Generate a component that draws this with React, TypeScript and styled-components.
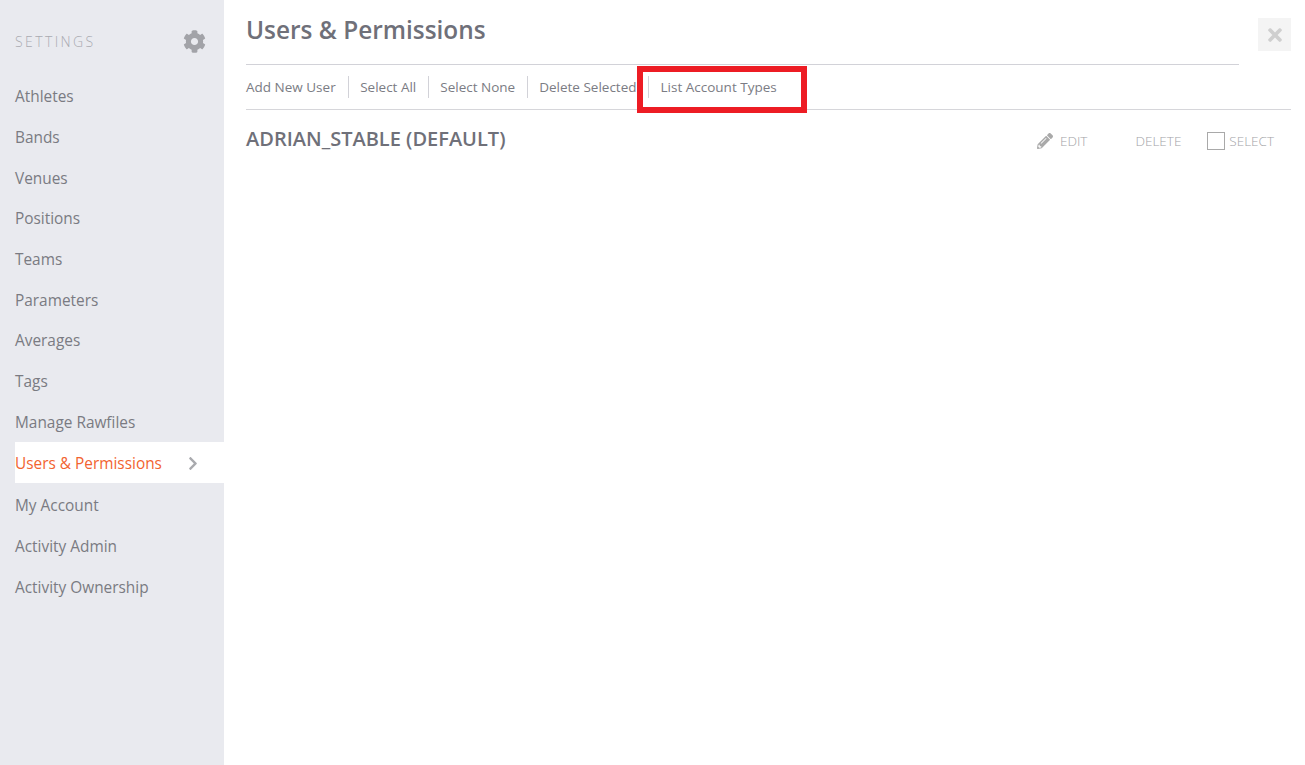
import React from 'react';
import styled, { createGlobalStyle } from 'styled-components';
import { FaCog, FaPencilAlt, FaChevronRight, FaTimes } from 'react-icons/fa';

const GlobalStyle = createGlobalStyle`
    html, body {
        margin: 0;
        padding: 0;
        height: 100%;
        background: #fff;
        font-family: "Open Sans", "Liberation Sans", sans-serif;
        overflow: hidden;
    }
`

const Page = styled.div`
    display: flex;
    width: 1305px;
    height: 765px;
    position: relative;
`

const Sidebar = styled.aside`
    width: 224px;
    flex: none;
    background: #e9eaef;
    padding-left: 15px;
    box-sizing: border-box;
`

const SidebarHead = styled.div`
    display: flex;
    align-items: center;
    justify-content: space-between;
    box-sizing: border-box;
    height: 76.3px;
    padding-top: 6.7px;
    padding-right: 18px;
`

const SidebarTitle = styled.span`
    font-size: 14px;
    font-weight: 300;
    letter-spacing: 2.4px;
    color: #a9abb1;
`

const GearIcon = styled(FaCog)`
    width: 23px;
    height: 23px;
    color: #a2a3a8;
`

const Nav = styled.nav`
    display: flex;
    flex-direction: column;
`

const NavItem = styled.div<{ $active?: boolean }>`
    display: flex;
    align-items: center;
    justify-content: space-between;
    flex: none;
    box-sizing: border-box;
    height: 40.7px;
    margin-top: ${p => (p.$active ? '-0.6px' : '0')};
    margin-bottom: ${p => (p.$active ? '2.8px' : '0')};
    padding-top: ${p => (p.$active ? '1.6px' : '0')};
    padding-right: 24px;
    font-size: 15.4px;
    color: ${p => (p.$active ? '#f26330' : '#7a7b82')};
    background: ${p => (p.$active ? '#fff' : 'transparent')};
`

const ChevronIcon = styled(FaChevronRight)`
    width: 14px;
    height: 15px;
    color: #a9aaae;
`

const Main = styled.main`
    flex: 1;
    padding-left: 22px;
    padding-right: 14px;
    min-width: 0;
`

const Header = styled.header`
    display: flex;
    align-items: flex-start;
    justify-content: space-between;
`

const TitleBar = styled.div`
    width: 993px;
    height: 64px;
    border-bottom: 1px solid #d2d2d8;
`

const Title = styled.h1`
    margin: 0;
    padding-top: 12px;
    font-size: 24.4px;
    line-height: 35px;
    font-weight: 600;
    color: #6f7079;
`

const CloseButton = styled.div`
    width: 33px;
    height: 33px;
    margin-top: 18px;
    display: flex;
    align-items: center;
    justify-content: center;
    background: #f4f4f4;
    color: #cfcfcf;
`

const Toolbar = styled.div`
    display: flex;
    align-items: center;
    height: 44px;
    border-bottom: 1px solid #d6d6da;
`

const ToolLink = styled.span`
    display: flex;
    align-items: center;
    height: 22px;
    padding: 0 11.5px;
    font-size: 13.5px;
    color: #7b7c84;
    border-left: 1px solid #d2d2d8;
    white-space: nowrap;
    &:first-child {
        padding-left: 0;
        padding-right: 12px;
        border-left: 0;
    }
`

const UserRow = styled.div`
    display: flex;
    align-items: center;
    justify-content: space-between;
    height: 60px;
`

const UserName = styled.h2`
    margin: 0;
    font-size: 20px;
    font-weight: 600;
    color: #6f7079;
    position: relative;
    top: -2px;
`

const UserActions = styled.div`
    display: flex;
    align-items: center;
    padding-top: 2px;
    padding-right: 17px;
    font-size: 13.5px;
    font-weight: 300;
    color: #a3a4a8;
`

const Action = styled.span<{ $gap?: number }>`
    display: flex;
    align-items: center;
    margin-left: ${p => p.$gap ?? 0}px;
`

const PencilIcon = styled(FaPencilAlt)`
    width: 16px;
    height: 16px;
    margin-right: 7px;
    color: #a9a9a9;
`

const CheckBox = styled.span`
    width: 16px;
    height: 16px;
    margin-right: 4px;
    border: 1px solid #a9a9a9;
    display: block;
`

// red callout drawn on top of the toolbar
const Callout = styled.div`
    position: absolute;
    left: 637px;
    top: 66px;
    width: 170px;
    height: 47px;
    box-sizing: border-box;
    border: 6px solid #ed1c24;
    pointer-events: none;
`

const navItems = ['Athletes', 'Bands', 'Venues', 'Positions', 'Teams', 'Parameters', 'Averages', 'Tags', 'Manage Rawfiles', 'Users & Permissions', 'My Account', 'Activity Admin', 'Activity Ownership'];
const tools = ['Add New User', 'Select All', 'Select None', 'Delete Selected', 'List Account Types'];

const App = () => {
    return (
        <Page>
            <GlobalStyle />
            <Sidebar>
                <SidebarHead>
                    <SidebarTitle>SETTINGS</SidebarTitle>
                    <GearIcon />
                </SidebarHead>
                <Nav>
                    {navItems.map(item => (
                        <NavItem key={item} $active={item === 'Users & Permissions'}>
                            {item}
                            {item === 'Users & Permissions' && <ChevronIcon />}
                        </NavItem>
                    ))}
                </Nav>
            </Sidebar>
            <Main>
                <Header>
                    <TitleBar>
                        <Title>Users &amp; Permissions</Title>
                    </TitleBar>
                    <CloseButton><FaTimes size={20} /></CloseButton>
                </Header>
                <Toolbar>
                    {tools.map(tool => <ToolLink key={tool}>{tool}</ToolLink>)}
                </Toolbar>
                <UserRow>
                    <UserName>ADRIAN_STABLE (DEFAULT)</UserName>
                    <UserActions>
                        <Action><PencilIcon />EDIT</Action>
                        <Action $gap={48}>DELETE</Action>
                        <Action $gap={26}><CheckBox />SELECT</Action>
                    </UserActions>
                </UserRow>
            </Main>
            <Callout />
        </Page>
    );
};

export default App;
